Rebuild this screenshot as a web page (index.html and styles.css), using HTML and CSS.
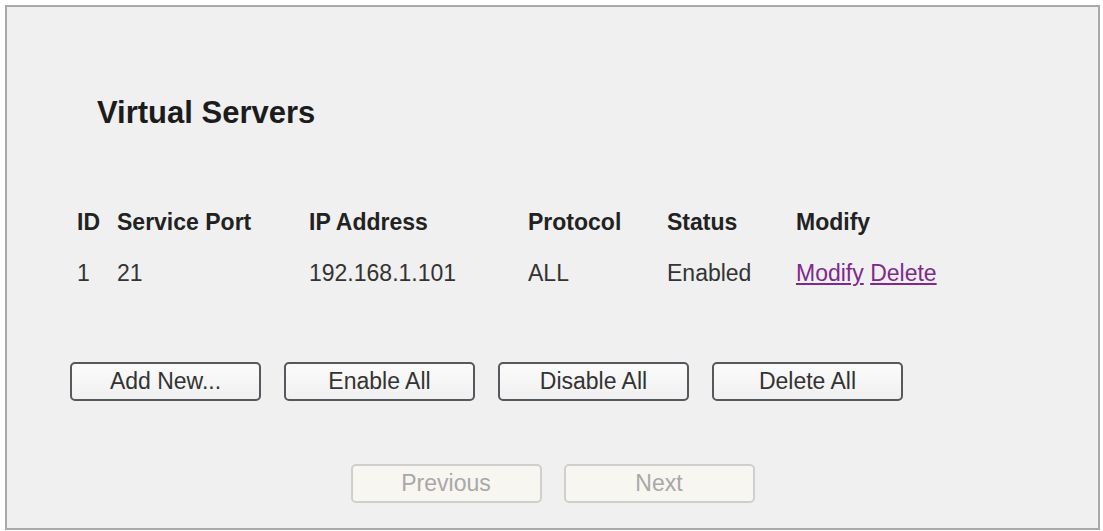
FILE: index.html
```html
<!DOCTYPE html>
<html lang="en">
<head>
<meta charset="utf-8">
<title>Virtual Servers</title>
<link rel="stylesheet" href="styles.css">
</head>
<body>
<div class="frame">
  <h1 class="title">Virtual Servers</h1>

  <div class="list">
    <div class="row head">
      <span>ID</span>
      <span>Service Port</span>
      <span>IP Address</span>
      <span>Protocol</span>
      <span>Status</span>
      <span>Modify</span>
    </div>
    <div class="row">
      <span>1</span>
      <span>21</span>
      <span>192.168.1.101</span>
      <span>ALL</span>
      <span>Enabled</span>
      <span><a href="#" class="link">Modify</a> <a href="#" class="link">Delete</a></span>
    </div>
  </div>

  <div class="actions">
    <button class="btn" type="button">Add New...</button>
    <button class="btn" type="button">Enable All</button>
    <button class="btn" type="button">Disable All</button>
    <button class="btn" type="button">Delete All</button>
  </div>

  <div class="pager">
    <button class="btn" type="button" disabled>Previous</button>
    <button class="btn" type="button" disabled>Next</button>
  </div>
</div>
</body>
</html>
```

FILE: styles.css
```css
html, body {
  margin: 0;
  padding: 0;
  background: #ffffff;
}

body {
  font-family: "Liberation Sans", Arial, sans-serif;
  color: #2e2e2e;
}

.frame {
  margin: 5px;
  width: 1095px;
  height: 525px;
  box-sizing: border-box;
  border: 2px solid #a9a9a9;
  background: #f0f0f0;
  padding-top: 88px;
  display: flex;
  flex-direction: column;
}

.title {
  margin: 0 0 0 90px;
  font-size: 31px;
  line-height: 35px;
  font-weight: bold;
  color: #1c1c1c;
}

.list {
  margin-top: 79px;
  padding-left: 68px;
}

.row {
  display: grid;
  grid-template-columns: 42px 192px 219px 139px 129px auto;
  height: 51px;
  font-size: 23px;
  line-height: 26px;
  color: #333333;
}

.row.head {
  font-weight: bold;
  color: #222222;
}

.row span:first-child {
  padding-left: 2px;
}

.link {
  color: #7e2a8c;
  text-decoration: underline;
}

.actions {
  margin-top: 51px;
  padding-left: 63px;
  display: flex;
  gap: 23px;
}

.pager {
  margin-top: 63px;
  display: flex;
  justify-content: center;
  gap: 22px;
}

.btn {
  width: 191px;
  height: 39px;
  box-sizing: border-box;
  border: 2px solid #55585d;
  border-radius: 5px;
  background: linear-gradient(#fbfbfb, #f0f0f0);
  font-family: "Liberation Sans", Arial, sans-serif;
  font-size: 23px;
  color: #333333;
  padding: 0;
}

.btn:disabled {
  border-color: #cfcfcf;
  background: #f7f6f0;
  color: #a8a8a8;
}
```
